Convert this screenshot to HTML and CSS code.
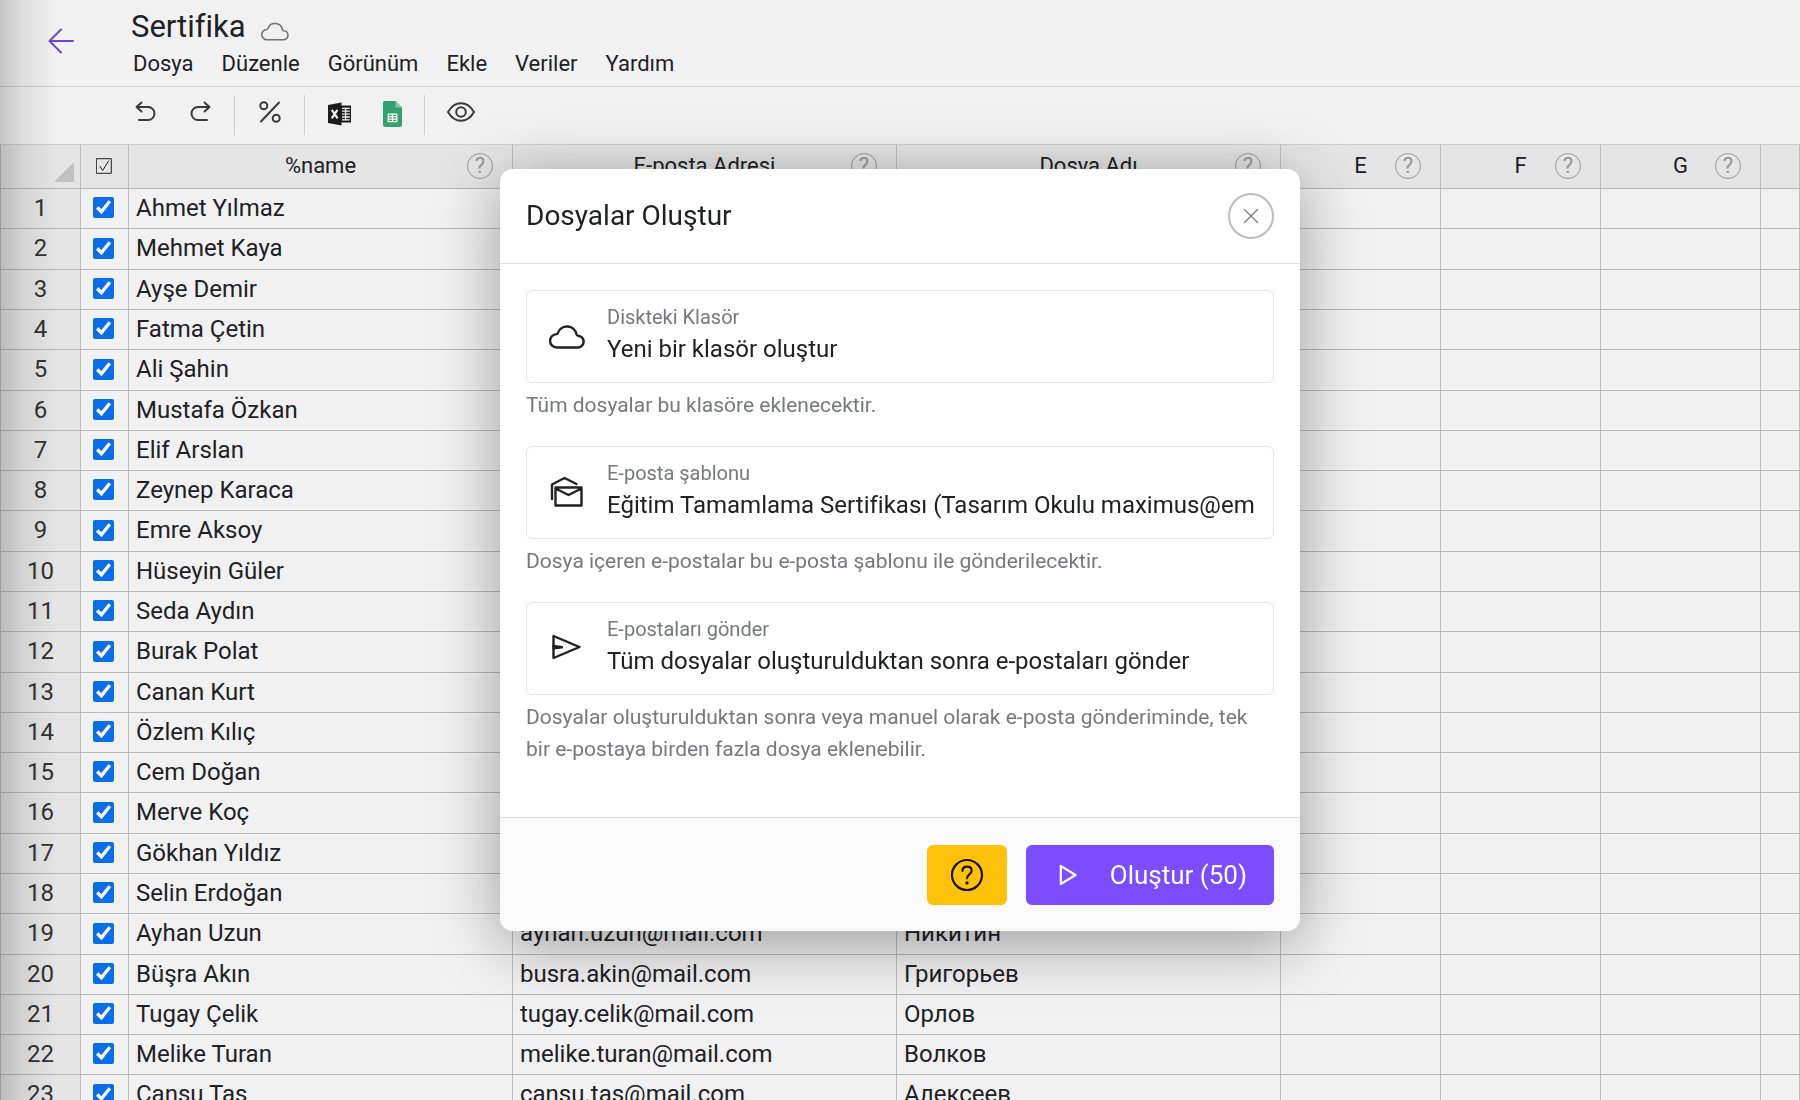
FILE: index.html
```html
<!DOCTYPE html>
<html lang="tr">
<head>
<meta charset="utf-8">
<title>Sertifika</title>
<link rel="stylesheet" href="styles.css">
</head>
<body>
<div class="app">
  <header class="topbar">
    <a class="back" href="#" aria-label="Geri">
      <svg width="26" height="26" viewBox="0 0 26 26"><path d="M13 1.500 1.500 13 13 24.500M1.500 13H25"/></svg>
    </a>
    <div class="heading">
      <div class="title-row">
        <h1>Sertifika</h1>
        <svg class="saved" width="28" height="21" viewBox="0 0 36 27"><path d="M8 25.500a6.700 6.700 0 0 1-.5-13.400c.8-.1 1.200-.6 1.400-1.300a9.700 9.700 0 0 1 18.600 1.500c.2.900.7 1.300 1.500 1.400a5.900 5.900 0 0 1-.5 11.800z"/></svg>
      </div>
      <nav class="menu">
        <button type="button">Dosya</button>
        <button type="button">Düzenle</button>
        <button type="button">Görünüm</button>
        <button type="button">Ekle</button>
        <button type="button">Veriler</button>
        <button type="button">Yardım</button>
      </nav>
    </div>
  </header>

  <div class="toolbar">
    <div class="tools">
      <button type="button" aria-label="Geri al"><svg width="22" height="22" viewBox="0 0 22 22"><path d="M6.500 1.500 1.500 6l5 4.500M1.500 6H13a6.500 6.500 0 0 1 0 13H4"/></svg></button>
      <button type="button" aria-label="Yinele"><svg width="22" height="22" viewBox="0 0 22 22"><path d="M15.500 1.500l5 4.500-5 4.500M20.500 6H9a6.500 6.500 0 0 0 0 13h9"/></svg></button>
    </div>
    <div class="tools">
      <button type="button" aria-label="Değişken"><svg width="22" height="22" viewBox="0 0 22 22"><path d="M20 1.500 2 20.500"/><circle cx="4.800" cy="4.800" r="3.500"/><circle cx="17.200" cy="17.200" r="3.500"/></svg></button>
    </div>
    <div class="tools brands">
      <button type="button" aria-label="Excel"><svg class="solid" width="24" height="24" viewBox="0 0 24 24"><path fill="#1c1c1c" d="M0 3 13.500.5V3.500H23v17H13.500v3L0 21z"/><path fill="none" stroke="#f1f1f1" stroke-width="2.200" d="m3.800 7.800 5.800 8.500M9.400 7.800l-5.600 8.500"/><path fill="none" stroke="#f1f1f1" stroke-width="1.300" d="M14 6.300h7.800M14 9.200h7.800M14 12.100h7.800M14 15h7.800M14 17.900h7.800M17.600 5.500v13"/></svg></button>
      <button type="button" aria-label="Google E-Tablolar"><svg class="solid" width="19" height="26" viewBox="0 0 19 26"><path fill="#32a16b" d="M2 0h10.500L19 6.500V24a2 2 0 0 1-2 2H2a2 2 0 0 1-2-2V2a2 2 0 0 1 2-2z"/><path fill="#86c9a6" d="M12.500 0 19 6.500h-6.500z"/><path fill="none" stroke="#fff" stroke-width="1.200" d="M5.200 13.100h8.600v7.600H5.200zM5.200 15.600h8.600M5.200 18.100h8.600M9.500 13v8"/></svg></button>
    </div>
    <div class="tools">
      <button type="button" aria-label="Önizleme"><svg width="28" height="20" viewBox="0 0 28 20"><path d="M1 10C4.500 4 9 1.200 14 1.200S23.500 4 27 10c-3.500 6-8 8.800-13 8.800S4.500 16 1 10z"/><circle cx="14" cy="10" r="4.800"/></svg></button>
    </div>
  </div>

  <main class="sheet">
    <table>
      <colgroup>
        <col class="c-num"><col class="c-check"><col class="c-wide"><col class="c-wide"><col class="c-wide"><col class="c-narrow"><col class="c-narrow"><col class="c-narrow"><col>
      </colgroup>
      <thead>
        <tr>
          <th><div class="corner"></div></th>
          <th class="check-cell"><svg class="tick" width="16" height="16" viewBox="0 0 16 16"><path d="M.7.7h14.600v14.600H.7zM4 8.500l2.700 4L12.500 3"/></svg></th>
          <th><div class="col-head"><span>%name</span><button type="button" class="hint">?</button></div></th>
          <th><div class="col-head"><span>E-posta Adresi</span><button type="button" class="hint">?</button></div></th>
          <th><div class="col-head"><span>Dosya Adı</span><button type="button" class="hint">?</button></div></th>
          <th><div class="col-head"><span>E</span><button type="button" class="hint">?</button></div></th>
          <th><div class="col-head"><span>F</span><button type="button" class="hint">?</button></div></th>
          <th><div class="col-head"><span>G</span><button type="button" class="hint">?</button></div></th>
          <th></th>
        </tr>
      </thead>
      <tbody>
        <tr><th>1</th><td class="check-cell"><input type="checkbox" aria-label="Satır 1" checked></td><td>Ahmet Yılmaz</td><td></td><td></td><td></td><td></td><td></td><td></td></tr>
        <tr><th>2</th><td class="check-cell"><input type="checkbox" aria-label="Satır 2" checked></td><td>Mehmet Kaya</td><td></td><td></td><td></td><td></td><td></td><td></td></tr>
        <tr><th>3</th><td class="check-cell"><input type="checkbox" aria-label="Satır 3" checked></td><td>Ayşe Demir</td><td></td><td></td><td></td><td></td><td></td><td></td></tr>
        <tr><th>4</th><td class="check-cell"><input type="checkbox" aria-label="Satır 4" checked></td><td>Fatma Çetin</td><td></td><td></td><td></td><td></td><td></td><td></td></tr>
        <tr><th>5</th><td class="check-cell"><input type="checkbox" aria-label="Satır 5" checked></td><td>Ali Şahin</td><td></td><td></td><td></td><td></td><td></td><td></td></tr>
        <tr><th>6</th><td class="check-cell"><input type="checkbox" aria-label="Satır 6" checked></td><td>Mustafa Özkan</td><td></td><td></td><td></td><td></td><td></td><td></td></tr>
        <tr><th>7</th><td class="check-cell"><input type="checkbox" aria-label="Satır 7" checked></td><td>Elif Arslan</td><td></td><td></td><td></td><td></td><td></td><td></td></tr>
        <tr><th>8</th><td class="check-cell"><input type="checkbox" aria-label="Satır 8" checked></td><td>Zeynep Karaca</td><td></td><td></td><td></td><td></td><td></td><td></td></tr>
        <tr><th>9</th><td class="check-cell"><input type="checkbox" aria-label="Satır 9" checked></td><td>Emre Aksoy</td><td></td><td></td><td></td><td></td><td></td><td></td></tr>
        <tr><th>10</th><td class="check-cell"><input type="checkbox" aria-label="Satır 10" checked></td><td>Hüseyin Güler</td><td></td><td></td><td></td><td></td><td></td><td></td></tr>
        <tr><th>11</th><td class="check-cell"><input type="checkbox" aria-label="Satır 11" checked></td><td>Seda Aydın</td><td></td><td></td><td></td><td></td><td></td><td></td></tr>
        <tr><th>12</th><td class="check-cell"><input type="checkbox" aria-label="Satır 12" checked></td><td>Burak Polat</td><td></td><td></td><td></td><td></td><td></td><td></td></tr>
        <tr><th>13</th><td class="check-cell"><input type="checkbox" aria-label="Satır 13" checked></td><td>Canan Kurt</td><td></td><td></td><td></td><td></td><td></td><td></td></tr>
        <tr><th>14</th><td class="check-cell"><input type="checkbox" aria-label="Satır 14" checked></td><td>Özlem Kılıç</td><td></td><td></td><td></td><td></td><td></td><td></td></tr>
        <tr><th>15</th><td class="check-cell"><input type="checkbox" aria-label="Satır 15" checked></td><td>Cem Doğan</td><td></td><td></td><td></td><td></td><td></td><td></td></tr>
        <tr><th>16</th><td class="check-cell"><input type="checkbox" aria-label="Satır 16" checked></td><td>Merve Koç</td><td></td><td></td><td></td><td></td><td></td><td></td></tr>
        <tr><th>17</th><td class="check-cell"><input type="checkbox" aria-label="Satır 17" checked></td><td>Gökhan Yıldız</td><td></td><td></td><td></td><td></td><td></td><td></td></tr>
        <tr><th>18</th><td class="check-cell"><input type="checkbox" aria-label="Satır 18" checked></td><td>Selin Erdoğan</td><td></td><td></td><td></td><td></td><td></td><td></td></tr>
        <tr><th>19</th><td class="check-cell"><input type="checkbox" aria-label="Satır 19" checked></td><td>Ayhan Uzun</td><td>ayhan.uzun@mail.com</td><td>Никитин</td><td></td><td></td><td></td><td></td></tr>
        <tr><th>20</th><td class="check-cell"><input type="checkbox" aria-label="Satır 20" checked></td><td>Büşra Akın</td><td>busra.akin@mail.com</td><td>Григорьев</td><td></td><td></td><td></td><td></td></tr>
        <tr><th>21</th><td class="check-cell"><input type="checkbox" aria-label="Satır 21" checked></td><td>Tugay Çelik</td><td>tugay.celik@mail.com</td><td>Орлов</td><td></td><td></td><td></td><td></td></tr>
        <tr><th>22</th><td class="check-cell"><input type="checkbox" aria-label="Satır 22" checked></td><td>Melike Turan</td><td>melike.turan@mail.com</td><td>Волков</td><td></td><td></td><td></td><td></td></tr>
        <tr><th>23</th><td class="check-cell"><input type="checkbox" aria-label="Satır 23" checked></td><td>Cansu Taş</td><td>cansu.tas@mail.com</td><td>Алексеев</td><td></td><td></td><td></td><td></td></tr>
      </tbody>
    </table>
  </main>
</div>

<div class="edge-shade"></div>

<div class="overlay">
  <section class="dialog" role="dialog" aria-labelledby="dialog-title">
    <header class="dialog-head">
      <h2 id="dialog-title">Dosyalar Oluştur</h2>
      <button type="button" class="close" aria-label="Kapat"><svg width="16" height="16" viewBox="0 0 16 16"><path d="m1.500 1.500 13 13M14.500 1.500l-13 13"/></svg></button>
    </header>
    <form class="dialog-body">
      <div class="group">
        <div class="field">
          <svg width="36" height="27" viewBox="0 0 36 27"><path d="M8 25.500a6.700 6.700 0 0 1-.5-13.400c.8-.1 1.200-.6 1.400-1.300a9.700 9.700 0 0 1 18.600 1.500c.2.900.7 1.300 1.500 1.400a5.900 5.900 0 0 1-.5 11.800z"/></svg>
          <div class="field-text">
            <label for="folder">Diskteki Klasör</label>
            <input id="folder" type="text" readonly value="Yeni bir klasör oluştur">
          </div>
        </div>
        <p>Tüm dosyalar bu klasöre eklenecektir.</p>
      </div>
      <div class="group">
        <div class="field">
          <svg width="36" height="32" viewBox="0 0 36 32"><path d="M6.500 12.500h26v18h-26zM6.500 13.500l13 6.500 13-6.500M3 24V9.500L15.500 3l12 6"/></svg>
          <div class="field-text">
            <label for="template">E-posta şablonu</label>
            <input id="template" type="text" readonly value="Eğitim Tamamlama Sertifikası (Tasarım Okulu maximus@em">
          </div>
        </div>
        <p>Dosya içeren e-postalar bu e-posta şablonu ile gönderilecektir.</p>
      </div>
      <div class="group">
        <div class="field">
          <svg width="36" height="26" viewBox="0 0 36 26"><path d="M4.500 2v22l26-11z"/><path d="M4.500 12v2.400L13 13.200z"/></svg>
          <div class="field-text">
            <label for="sending">E-postaları gönder</label>
            <input id="sending" type="text" readonly value="Tüm dosyalar oluşturulduktan sonra e-postaları gönder">
          </div>
        </div>
        <p>Dosyalar oluşturulduktan sonra veya manuel olarak e-posta gönderiminde, tek bir e-postaya birden fazla dosya eklenebilir.</p>
      </div>
    </form>
    <footer class="dialog-foot">
      <button type="button" class="help" aria-label="Yardım"><svg width="34" height="34" viewBox="0 0 34 34"><circle cx="17" cy="17" r="15"/><path d="M12.500 13c0-2.700 2-4.300 4.600-4.300s4.500 1.600 4.500 4c0 3.700-4.500 3.600-4.500 7.500"/><circle class="dot" cx="17" cy="25" r="1.700"/></svg></button>
      <button type="button" class="create"><svg width="18" height="22" viewBox="0 0 18 22"><path d="M1.800 2v18L16.500 11z"/></svg><span>Oluştur (50)</span></button>
    </footer>
  </section>
</div>
</body>
</html>
```

FILE: styles.css
```css
* {
  box-sizing: border-box;
}

body {
  margin: 0;
  height: 100vh;
  overflow: hidden;
  background: #f1f1f1;
  color: #202124;
  font-family: Roboto, "Liberation Sans", sans-serif;
}

h1,
h2,
p {
  margin: 0;
  font-weight: 400;
}

button {
  padding: 0;
  border: 0;
  background: none;
  color: inherit;
  font: inherit;
}

svg {
  display: block;
  flex: none;
  fill: none;
  stroke: currentColor;
  stroke-linejoin: round;
  stroke-linecap: round;
}

svg.solid {
  stroke: none;
  stroke-linecap: butt;
}

.topbar {
  display: flex;
  height: 87px;
  border-bottom: 1px solid #d2d2d2;
}

.back {
  width: 131px;
  padding: 28px 0 0 48px;
  color: #6b47d0;
}

.back svg {
  stroke-width: 2;
}

.title-row {
  display: flex;
  align-items: center;
  gap: 15px;
  padding-top: 8px;
}

h1 {
  font-size: 31px;
  line-height: 38px;
}

.saved {
  margin-top: 6px;
  color: #6f7174;
  stroke-width: 2;
}

.menu {
  display: flex;
  gap: 28px;
  padding-left: 2px;
  font-size: 22px;
  line-height: 36px;
}

.toolbar {
  display: flex;
  align-items: flex-start;
  height: 58px;
  padding: 8px 0 0 102px;
  border-bottom: 1px solid #d0d0d0;
}

.tools {
  display: flex;
  gap: 32px;
  height: 40px;
  padding: 0 23px 6px 33px;
  color: #3a3b3d;
}

.tools + .tools {
  padding-left: 24px;
  border-left: 1px solid #d0d0d0;
}

.tools.brands {
  gap: 31px;
  padding-right: 22px;
  padding-bottom: 2px;
  padding-left: 23px;
}

.tools:last-child {
  padding-left: 22px;
}

.tools button {
  display: flex;
  align-items: center;
  justify-content: center;
}

.tools svg {
  stroke-width: 2;
}

table {
  width: 100%;
  table-layout: fixed;
  border-collapse: separate;
  border-spacing: 0;
  border-left: 1px solid #bdbdbd;
}

.c-num {
  width: 80px;
}

.c-check {
  width: 48px;
}

.c-wide {
  width: 384px;
}

.c-narrow {
  width: 160px;
}

th,
td {
  height: 40px;
  padding: 0;
  border-right: 1px solid #bdbdbd;
  border-bottom: 1px solid #b9b9b9;
  font-weight: 400;
  white-space: nowrap;
}

thead th {
  height: 44px;
  background: #e5e5e5;
  font-size: 22px;
  line-height: 26px;
}

tbody th {
  background: #e5e5e5;
  color: #333;
}

tbody th,
tbody td {
  padding-bottom: 2px;
  font-size: 24px;
  line-height: 36px;
}

tbody tr:nth-child(7n + 2) > *,
tbody tr:nth-child(7n + 5) > * {
  height: 41px;
}

td {
  padding-left: 7px;
  text-align: left;
}

.check-cell {
  padding-right: 2px;
  padding-left: 0;
}

td input {
  display: block;
  width: 21px;
  height: 21px;
  margin: 0 auto;
  accent-color: #0a6eea;
}

.corner {
  width: 20px;
  height: 20px;
  margin: 11px 6px 0 auto;
  background: #c2c2c2;
  clip-path: polygon(100% 0, 100% 100%, 0 100%);
}

.tick {
  margin: 0 auto 2px;
  stroke-linejoin: miter;
}

.col-head {
  display: grid;
  grid-template-columns: 1fr auto 1fr;
  align-items: center;
  padding: 0 19px 1px;
}

.col-head span {
  grid-column: 2;
  padding-bottom: 1px;
}

.hint {
  justify-self: end;
  width: 26px;
  height: 26px;
  border: 1px solid #979797;
  border-radius: 50%;
  color: #979797;
  font-size: 22px;
  line-height: 22px;
}

.edge-shade {
  position: fixed;
  inset: 0 auto 0 0;
  width: 56px;
  background: linear-gradient(to right, rgba(0, 0, 0, 0.18), rgba(0, 0, 0, 0.08) 40%, transparent);
  pointer-events: none;
}

.overlay {
  position: fixed;
  inset: 0;
  display: flex;
  align-items: center;
  justify-content: center;
}

.dialog {
  width: 100%;
  max-width: 800px;
  overflow: hidden;
  border-radius: 13px;
  background: #fff;
  box-shadow: 0 12px 64px rgba(0, 0, 0, 0.36);
}

.dialog-head {
  display: flex;
  align-items: center;
  justify-content: space-between;
  height: 95px;
  padding: 0 26px;
  border-bottom: 1px solid #e0e0e0;
}

h2 {
  font-size: 28px;
  line-height: 36px;
}

.close {
  display: flex;
  align-items: center;
  justify-content: center;
  width: 46px;
  height: 46px;
  border: 2px solid #bdbdbd;
  border-radius: 50%;
  color: #8a8a8a;
}

.close svg {
  stroke-width: 1.5;
}

.dialog-body {
  display: flex;
  flex-direction: column;
  gap: 25px;
  padding: 26px 26px 52px;
}

.field {
  display: flex;
  align-items: center;
  gap: 22px;
  padding: 12px 17px 15px 22px;
  border: 1px solid #e4e4e4;
  border-radius: 6px;
}

.field svg {
  stroke-width: 2.4;
}

.field-text {
  flex: 1;
  min-width: 0;
}

.field label {
  display: block;
  color: #76787b;
  font-size: 20px;
  line-height: 28px;
}

.field input {
  display: block;
  width: 100%;
  height: 36px;
  padding: 0;
  border: 0;
  outline: 0;
  background: none;
  color: #202124;
  font: inherit;
  font-size: 24px;
}

.group p {
  padding-top: 6px;
  color: #76787b;
  font-size: 21px;
  line-height: 32px;
}

.dialog-foot {
  display: flex;
  justify-content: flex-end;
  gap: 19px;
  padding: 27px 26px 26px;
  border-top: 1px solid #dcdcdc;
  background: #fafafa;
}

.help,
.create {
  display: flex;
  align-items: center;
  justify-content: center;
  height: 60px;
  border-radius: 6px;
}

.help {
  width: 80px;
  background: #ffc10a;
  color: #1c1300;
}

.help svg {
  stroke-width: 2.2;
}

.help .dot {
  fill: currentColor;
  stroke: none;
}

.create {
  gap: 33px;
  padding: 0 27px 0 33px;
  background: #7c4dff;
  color: #fff;
  font-size: 26px;
}

.create svg {
  stroke-width: 2.2;
}
```
